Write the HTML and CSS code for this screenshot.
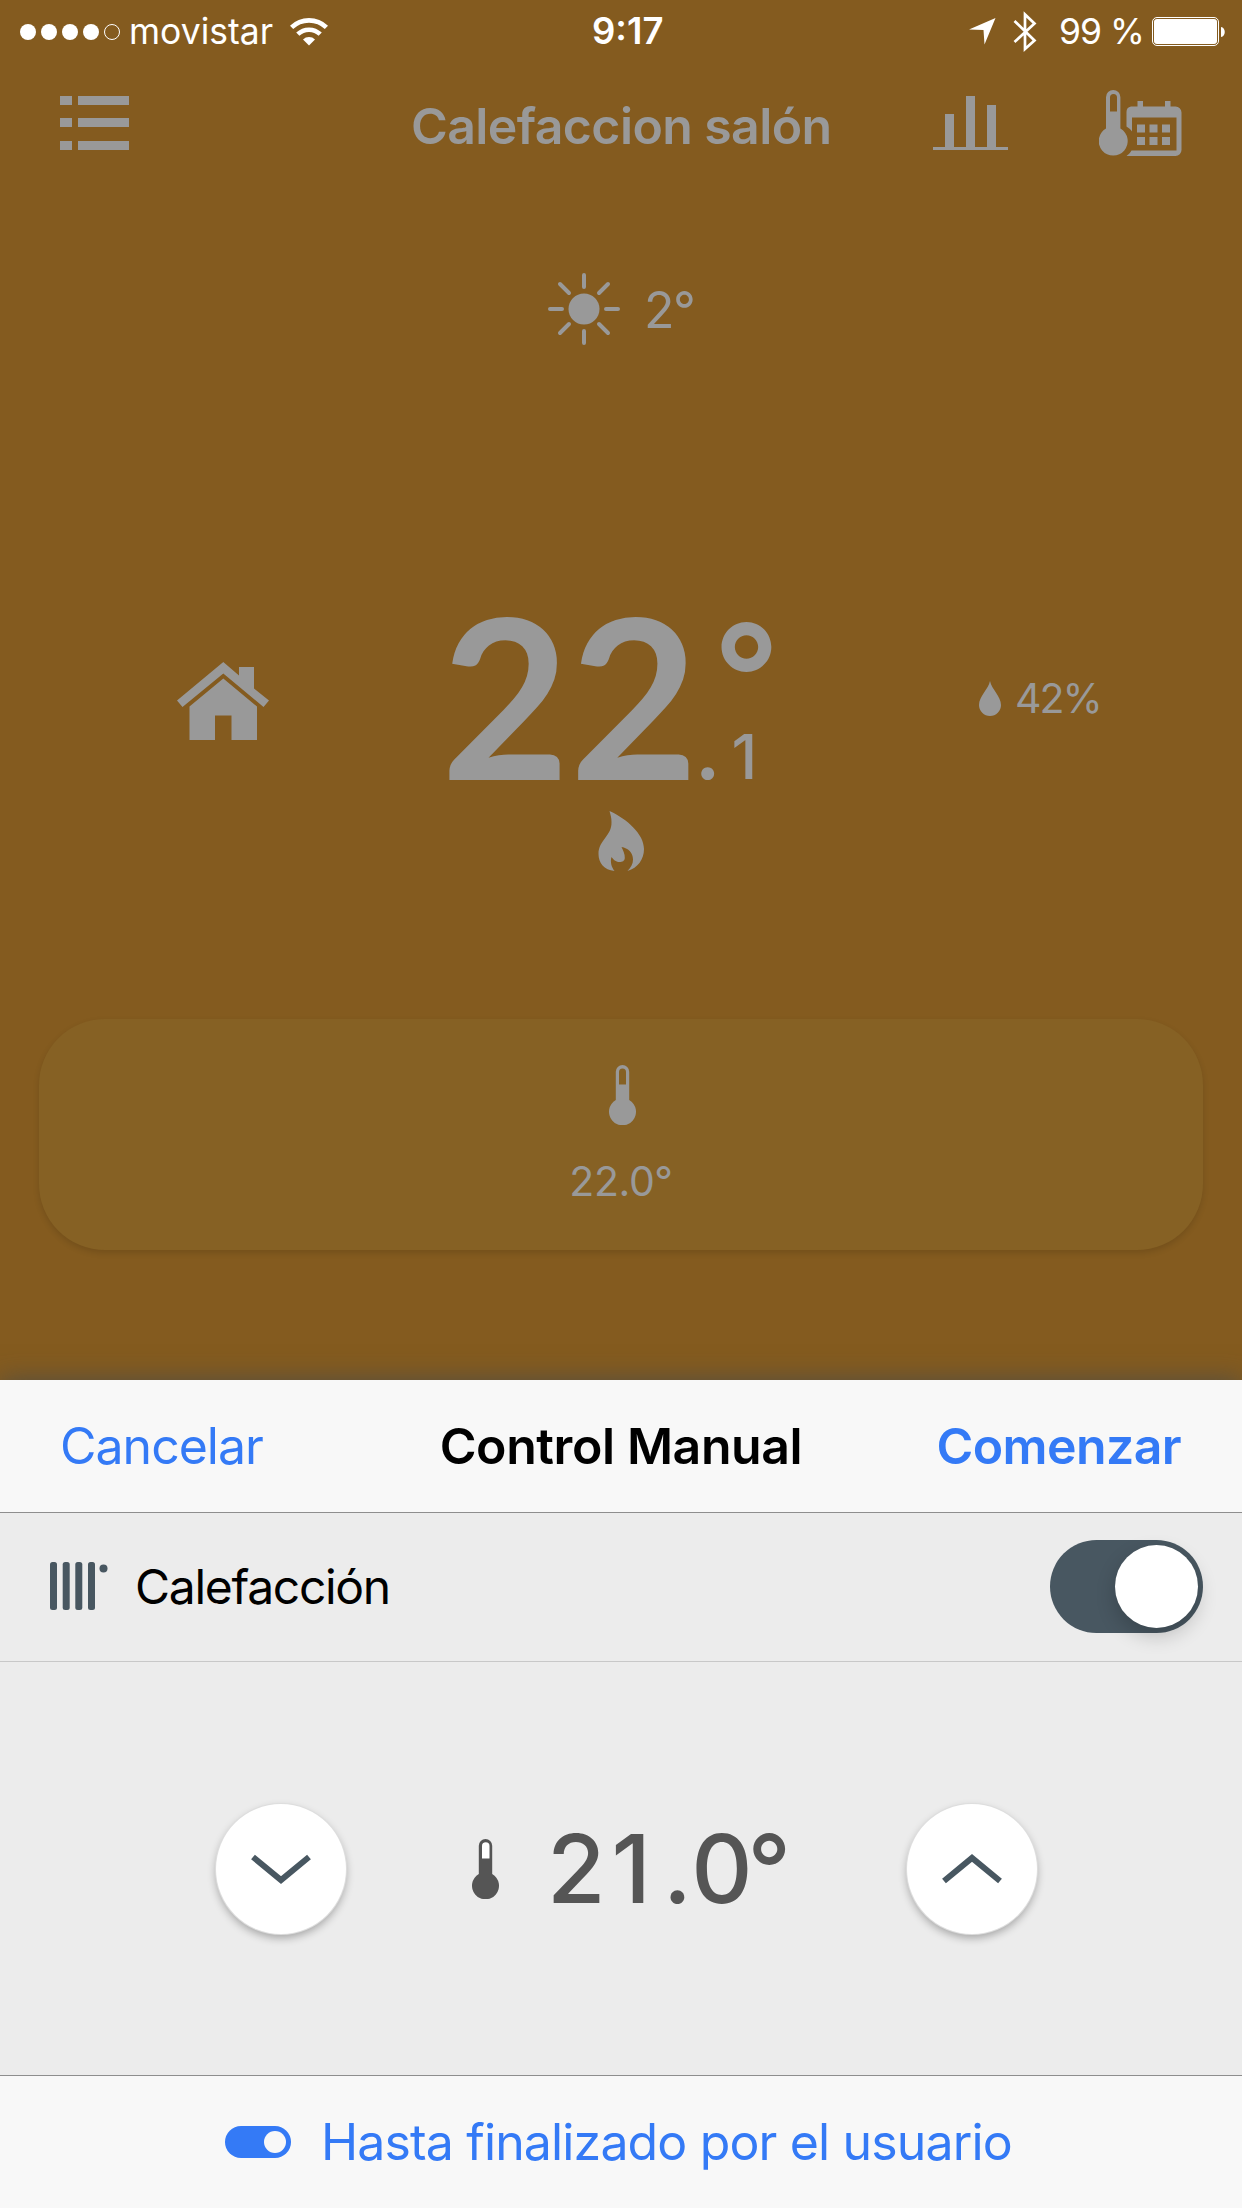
FILE: index.html
```html
<!DOCTYPE html>
<html lang="es">
<head>
  <meta charset="UTF-8" />
  <meta name="viewport" content="width=device-width, initial-scale=1.0"/>
  <title>Calefaccion salón</title>
  <link rel="stylesheet" href="styles.css">
</head>

<body>
  <div class="app">
    <!-- Barra de estado -->
    <div class="status-bar">
      <div class="status-left">
        <div class="signal"><i></i><i></i><i></i><i></i><i class="empty"></i></div>
        <span class="carrier">movistar</span>
        <svg class="wifi" width="38" height="28" viewBox="0 0 38 28">
          <g fill="none" stroke="#fff" stroke-width="4.6">
            <path d="M1.6 9.4a25 25 0 0 1 34.8 0"/>
            <path d="M7.8 16.2a16.2 16.2 0 0 1 22.4 0"/>
          </g>
          <path d="M13 21.4a8.6 8.6 0 0 1 12 0L19 27.5z" fill="#fff"/>
        </svg>
      </div>
      <span class="clock">9:17</span>
      <div class="status-right">
        <svg class="location" width="27" height="27" viewBox="0 0 27 27">
          <path d="M26.5 0L15.5 26.5L14.5 12L0 11.5z" fill="#fff"/>
        </svg>
        <svg class="bluetooth" width="24" height="42" viewBox="0 0 24 42">
          <path d="M1.5 10L21.5 29.5L12 38V3.5L21.5 12.5L1.5 31" fill="none" stroke="#fff" stroke-width="2.7"/>
        </svg>
        <span class="percent">99 %</span>
        <svg class="battery" width="74" height="29" viewBox="0 0 74 29">
          <rect x=".5" y=".5" width="66" height="28" rx="4.5" fill="none" stroke="#fff"/>
          <rect x="2" y="2" width="63" height="25" rx="3" fill="#fff"/>
          <path d="M69 10c5 .5 5 9.500 0 10z" fill="#fff"/>
        </svg>
      </div>
    </div>

    <div class="nav-bar">
      <svg class="menu" width="69" height="54" viewBox="0 0 69 54">
        <path d="M0 0h12v9H0zM18 0h51v9H18zM0 22h12v9H0zM18 22h51v9H18zM0 45h12v9H0zM18 45h51v9H18z"/>
      </svg>
      <h1>Calefaccion salón</h1>
      <div class="nav-actions">
        <svg width="75" height="54" viewBox="0 0 75 54">
          <path d="M0 51h75v3H0zM12 18h9v34h-9zM33 0h9v52h-9zM54 9h9v43h-9z"/>
        </svg>
        <svg width="83" height="66" viewBox="0 0 83 66">
          <path fill-rule="evenodd" d="M7 7.200a7.200 7.200 0 0 1 14.400 0V38.500a14.500 14.500 0 1 1-14.400 0zM11 7.500V21.500h7V7.500a3.500 3.500 0 0 0-7 0z"/>
          <path fill-rule="evenodd" d="M32 16.500h6.500V11h5.500v5.500h22V11h5.500v5.500H76.500a6 6 0 0 1 6 6V60a6 6 0 0 1-6 6H27.500c2-1.500 3.500-3 5-5.500H77.500V27.500H33V41.500c-1.500-2-3-3.500-5.500-5V22a5.500 5.500 0 0 1 4.500-5.500z"/>
          <path d="M38 34.500h8v8h-8zM50.500 34.500h8v8h-8zM63 34.500h8v8h-8zM38 47h8v8h-8zM50.500 47h8v8h-8zM63 47h8v8h-8z"/>
        </svg>
      </div>
    </div>

    <div class="weather">
      <svg width="74" height="74" viewBox="-37 -37 74 74">
        <circle r="15.500"/>
        <path d="M0-34V-22M0 22V34M-34 0H-22M22 0H34M-24-25L-15-16M24-25L15-16M-24 24L-15 15M24 24L15 15" fill="none" stroke="#999" stroke-width="4" stroke-linecap="round"/>
      </svg>
      <span>2°</span>
    </div>

    <div class="current">
      <svg class="house" width="92" height="78" viewBox="0 0 92 78">
        <path d="M46.300 0L62 13.500V5h15v21.500L92 38.500l-5.500 6.500L46.300 11.500L5.500 45L0 38.500z"/>
        <path d="M46.300 16.500L80 44.500V78H54.500V53.500H38V78H12.500V44.500z"/>
      </svg>
      <div class="temperature">
        <span class="integer">22</span>
        <div class="fraction">
          <span class="degree">°</span>
          <span class="decimal"><b>.</b>1</span>
        </div>
      </div>
      <div class="humidity">
        <svg width="22" height="35" viewBox="0 0 22 35">
          <path d="M11 0C12.500 8 22 15.500 22 24a11 11 0 0 1-22 0C0 15.500 9.500 8 11 0z"/>
        </svg>
        <span>42%</span>
      </div>
    </div>

    <svg class="flame" width="46" height="60" viewBox="0 0 46 60">
      <path d="M11.500 0C29 8 46 23 46 38c0 10-6 19-16.500 22C33 56 35 53 35 48.500c0-7-5-11.500-11.500-12.500C25 39 27 43 26.800 47c-.2 3-2.500 4-5.300 4c-4 0-6-2.500-8-5c-1.500 5 0 10 3 14C6 59 .5 52 .5 43C.5 29 14 25 13.500 11C13.500 7 12.500 3.500 11.500 0z"/>
    </svg>

    <div class="card">
      <svg width="27" height="60" viewBox="0 0 27 60">
        <path fill-rule="evenodd" d="M6.800 6.700a6.700 6.700 0 0 1 13.400 0V35a13.500 13.500 0 1 1-13.400 0zM10 7V19.500h7V7a3.500 3.500 0 0 0-7 0z"/>
      </svg>
      <span>22.0°</span>
    </div>
  </div>

  <!-- Panel de control manual -->
  <div class="sheet">
    <div class="sheet-header">
      <button class="cancel">Cancelar</button>
      <h2>Control Manual</h2>
      <button class="start">Comenzar</button>
    </div>

    <div class="option">
      <svg width="58" height="48" viewBox="0 0 58 48">
        <rect width="7" height="48" rx="2.500"/>
        <rect x="12.700" width="7" height="48" rx="2.500"/>
        <rect x="25.300" width="7" height="48" rx="2.500"/>
        <rect x="38" width="7" height="48" rx="2.500"/>
        <circle cx="53.500" cy="6.500" r="4"/>
      </svg>
      <span>Calefacción</span>
      <div class="switch"><div class="knob"></div></div>
    </div>

    <div class="setpoint">
      <button class="round">
        <svg width="60" height="32" viewBox="0 0 60 32"><path d="M2 4L30 27L58 4"/></svg>
      </button>
      <div class="value">
        <svg width="27" height="60" viewBox="0 0 27 60">
          <rect x="9" y="3" width="9" height="18" rx="4" fill="#fff"/>
          <path fill-rule="evenodd" d="M6.800 6.700a6.700 6.700 0 0 1 13.400 0V35a13.500 13.500 0 1 1-13.400 0zM10 7V19.500h7.500V7a3.700 3.700 0 0 0-7.500 0z"/>
        </svg>
        <span>2<b class="one">1</b>.<b class="zero">0</b>°</span>
      </div>
      <button class="round">
        <svg width="60" height="32" viewBox="0 0 60 32"><path d="M2 28L30 5L58 28"/></svg>
      </button>
    </div>

    <div class="sheet-footer">
      <svg width="66" height="32" viewBox="0 0 66 32">
        <rect width="66" height="32" rx="16"/>
        <circle cx="50" cy="16" r="11" fill="#f8f8f8"/>
      </svg>
      <span>Hasta finalizado por el usuario</span>
    </div>
  </div>
</body>
</html>
```

FILE: styles.css
```css
* {
  box-sizing: border-box;
}

body {
  margin: 0;
  width: 1242px;
  height: 2208px;
  overflow: hidden;
  font-family: Inter, "Liberation Sans", sans-serif;
  background: #845b1f;
}

h1, h2 {
  margin: 0;
  font-size: 50px;
  font-weight: 600;
}

button {
  padding: 0;
  border: none;
  background: none;
  font-family: inherit;
  cursor: pointer;
}

svg {
  display: block;
  flex-shrink: 0;
}

span, h1, h2 {
  white-space: nowrap;
}

.app {
  height: 1380px;
  color: #999;
  fill: #999;
}

/* Barra de estado */
.status-bar {
  display: grid;
  grid-template-columns: 592px 1fr 273px;
  height: 60px;
  color: #fff;
  font-size: 35.5px;
  line-height: 62px;
}

.status-left,
.status-right {
  display: flex;
  align-items: center;
}

.status-left {
  padding-left: 20px;
}

.signal {
  display: flex;
  gap: 5px;
  width: 109px;
}

.signal i {
  width: 16px;
  height: 16px;
  border-radius: 50%;
  background: #fff;
}

.signal .empty {
  background: none;
  border: 1px solid #fff;
}

.carrier {
  width: 161px;
  padding-top: 1px;
}

.clock {
  font-size: 36.5px;
  font-weight: 600;
}

.bluetooth {
  margin-left: 17px;
}

.percent {
  width: 93px;
  margin-left: 22px;
  padding-top: 1px;
  letter-spacing: -1px;
}

/* Cabecera */
.nav-bar {
  display: grid;
  grid-template-columns: 1fr 420px 1fr;
  align-items: center;
  height: 132px;
  padding: 0 60px;
}

.nav-bar h1 {
  text-align: center;
  letter-spacing: -0.6px;
}

.menu {
  margin-bottom: 6px;
}

.nav-actions {
  display: flex;
  justify-content: flex-end;
  align-items: center;
  gap: 91px;
  margin-bottom: 6px;
}

.weather {
  display: flex;
  align-items: center;
  gap: 23px;
  height: 76px;
  margin-top: 79px;
  padding-left: 547px;
  font-size: 50px;
  letter-spacing: -1.5px;
}

.weather span {
  padding-top: 2px;
}

/* Temperatura actual */
.current {
  display: flex;
  align-items: flex-start;
  height: 200px;
  margin-top: 253px;
  padding-left: 177px;
}

.house {
  margin-top: 62px;
}

.temperature {
  display: flex;
  width: 538px;
  margin-left: 172px;
}

.integer {
  width: 252px;
  font-family: Lato, sans-serif;
  font-size: 222px;
  font-weight: 700;
  line-height: 189px;
}

.fraction {
  display: flex;
  flex-direction: column;
  height: 200px;
}

.degree {
  height: 109px;
  padding-left: 20px;
  font-size: 146px;
  font-weight: 600;
  line-height: 153px;
}

.decimal {
  padding-left: 2px;
  font-size: 62px;
  font-weight: 500;
  line-height: 85px;
}

.decimal b {
  margin-right: 11px;
  font-size: 76px;
}

.humidity {
  display: flex;
  align-items: center;
  gap: 14px;
  margin-top: 79px;
  font-size: 41px;
  line-height: 38px;
  letter-spacing: -2px;
}

.flame {
  margin: 11px 0 0 598px;
}

.card {
  display: flex;
  flex-direction: column;
  align-items: center;
  height: 231px;
  margin: 148px 39px 0;
  padding: 46px 0 0 2px;
  border-radius: 66px;
  background: #866124;
  box-shadow: 0 3px 6px rgba(0, 0, 0, 0.13);
  font-size: 41px;
  letter-spacing: -0.4px;
}

.card span {
  margin: 36px 2px 0 0;
  line-height: 40px;
}

/* Panel inferior */
.sheet {
  height: 828px;
  background: #ececec;
  box-shadow: 0 0 24px rgba(70, 75, 75, 0.8);
  position: relative;
}

.sheet-header {
  display: grid;
  grid-template-columns: 1fr 366px 1fr;
  align-items: center;
  height: 133px;
  padding: 0 60px;
  background: #f8f8f8;
  border-bottom: 1px solid #8e8e8e;
}

.sheet-header button {
  color: #347af6;
  font-size: 50px;
}

.sheet-header h2 {
  text-align: center;
  letter-spacing: -0.4px;
}

.sheet-header .cancel {
  text-align: left;
  letter-spacing: -1px;
}

.sheet-header .start {
  padding-right: 1px;
  text-align: right;
  font-weight: 600;
  letter-spacing: -0.6px;
}

.option {
  display: flex;
  align-items: center;
  height: 149px;
  padding: 0 39px 2px 50px;
  border-bottom: 1px solid #c8c8c8;
  font-size: 48px;
  fill: #485761;
}

.option span {
  margin-left: 27px;
  letter-spacing: -1.3px;
}

.switch {
  display: flex;
  justify-content: flex-end;
  width: 153px;
  height: 93px;
  margin-left: auto;
  padding: 5px;
  border-radius: 47px;
  background: #485761;
}

.knob {
  width: 83px;
  height: 83px;
  border-radius: 50%;
  background: #fff;
  box-shadow: 0 8px 20px rgba(0, 0, 0, 0.2);
}

.setpoint {
  display: flex;
  align-items: center;
  height: 413px;
  padding: 0 205px 0 216px;
  color: #555;
}

.round {
  display: flex;
  align-items: center;
  justify-content: center;
  width: 130px;
  height: 130px;
  border-radius: 50%;
  background: #fff;
  box-shadow: 0 0 0 1px #dedede, 0 4px 8px rgba(0, 0, 0, 0.3);
}

.round path {
  fill: none;
  stroke: #485761;
  stroke-width: 6;
}

.value {
  display: flex;
  align-items: center;
  width: 561px;
  padding-left: 126px;
  font-size: 95px;
  font-weight: 500;
  fill: #555;
}

.value span {
  margin-left: 48px;
  letter-spacing: 2px;
}

.value b {
  font-weight: 500;
}

.value .one {
  margin: 0 10px 0 4px;
}

.value .zero {
  margin-right: -7px;
}

.sheet-footer {
  display: flex;
  align-items: center;
  height: 133px;
  padding-left: 225px;
  border-top: 1px solid #8e8e8e;
  background: #f8f8f8;
  color: #347af6;
  fill: #347af6;
  font-size: 50px;
}

.sheet-footer span {
  margin-left: 30px;
  letter-spacing: -0.85px;
}
```
